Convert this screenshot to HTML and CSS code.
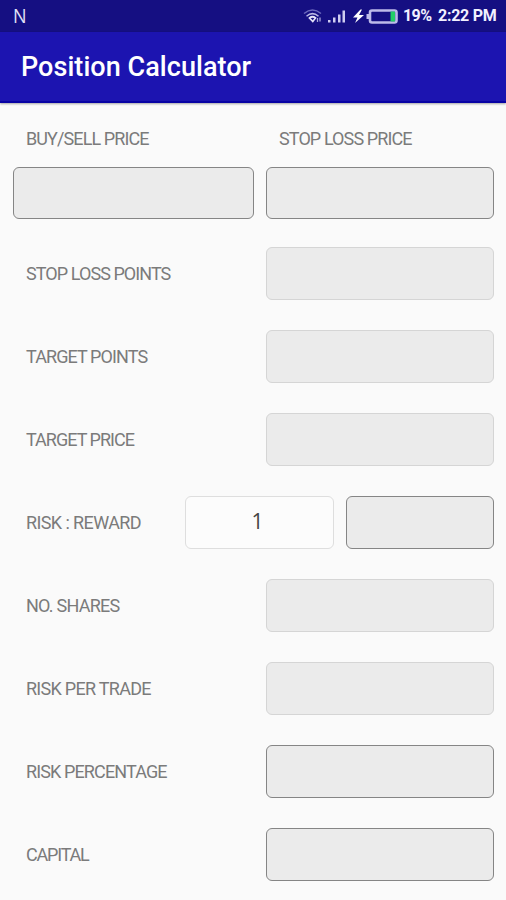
FILE: index.html
```
<!DOCTYPE html>
<html lang="en">
<head>
<meta charset="utf-8">
<title>Position Calculator</title>
<link rel="stylesheet" href="styles.css">
</head>
<body>
<div class="status">
  <span class="notif">N</span>
  <div class="tray">
    <svg class="icons" width="96" height="20" viewBox="0 0 96 20">
      <g fill="none" stroke="#6c69bd" stroke-width="1.5">
        <path d="M1 7.5Q9.500 .5 18 7.500"/>
        <path stroke="#b9b7e4" d="M3.500 10.200Q9.500 5 15.500 10.200"/>
      </g>
      <path fill="none" stroke="#e4e3f8" stroke-width="1.700" d="M6.500 12Q9.500 9.500 12.500 12L9.800 15.500Z"/>
      <path d="M14.500 12v4M17 11.500v4" stroke="#a9a7dc" stroke-width="1.300"/>
      <g fill="#cfcdf0"><path d="M25 14h2.500v2.500H25zM30 11.500h2.500v5H30zM35 8.500h2.500v8H35zM39.500 4.500H42v12h-2.500z"/></g>
      <path fill="#fff" d="M57.500 3.500L50 11.500h4.500L52 17l9-8h-5L59 3.500z"/>
      <rect x="67" y="4.500" width="26.500" height="12" rx="2" fill="none" stroke="#bdbbe9" stroke-width="2.600"/>
      <path fill="#bdbbe9" d="M63.500 8H67v5h-3.500z"/>
      <path fill="#23cf67" d="M87.500 5.500H92v10h-4.500z"/>
    </svg>
    <span class="percent">19%</span>
    <span class="clock">2:22 PM</span>
  </div>
</div>
<header class="bar"><h1>Position Calculator</h1></header>
<main class="form">
  <div class="heads"><label class="l-buy">BUY/SELL PRICE</label><label class="l-slprice">STOP LOSS PRICE</label></div>
  <div class="prices"><div class="field active buy"></div><div class="field active"></div></div>
  <div class="row"><label class="l-slpoints">STOP LOSS POINTS</label><div class="field"></div></div>
  <div class="row"><label class="l-tpoints">TARGET POINTS</label><div class="field"></div></div>
  <div class="row"><label class="l-tprice">TARGET PRICE</label><div class="field"></div></div>
  <div class="row"><label class="l-reward">RISK : REWARD</label><div class="ratio"><div class="field plain">1</div><div class="field active"></div></div></div>
  <div class="row"><label class="l-shares">NO. SHARES</label><div class="field"></div></div>
  <div class="row"><label class="l-trade">RISK PER TRADE</label><div class="field"></div></div>
  <div class="row"><label class="l-percent">RISK PERCENTAGE</label><div class="field active"></div></div>
  <div class="row"><label class="l-capital">CAPITAL</label><div class="field active"></div></div>
</main>
</body>
</html>
```
FILE: styles.css
```
* { box-sizing: border-box; }
body { margin: 0; height: 900px; overflow: hidden; background: #fafafa; font-family: Roboto, "Liberation Sans", sans-serif; }
.status { height: 32px; background: #150f82; color: #f1f0ff; display: flex; align-items: center; justify-content: space-between; padding: 0 9px 0 13px; }
.notif { font: 20px/32px "Open Sans", sans-serif; transform: scaleX(.9); transform-origin: left; color: #e2e1f7; }
.tray { display: flex; align-items: center; font-size: 16px; font-weight: 700; line-height: 34px; }
.icons { margin: 0 4px 0 0; }
.percent { width: 35px; letter-spacing: -.6px; white-space: nowrap; }
.clock { width: 59px; letter-spacing: -.25px; white-space: nowrap; }
.bar { height: 71px; background: #1c14b0; border-bottom: 2px solid #0802a4; padding: 0 21px; display: flex; align-items: center; box-shadow: 0 1px 2px rgba(0,0,0,.35); }
.bar h1 { margin: 0; color: #fff; font-size: 27px; line-height: 30px; font-weight: 500; letter-spacing: .05px; white-space: nowrap; }
.form { padding: 24px 12px 0 13px; }
label { color: #7b7b7b; font-size: 18px; line-height: 24px; font-weight: 400; white-space: nowrap; }
.heads { display: grid; grid-template-columns: 253px 1fr; padding-left: 13px; height: 40px; }
.prices { display: flex; justify-content: space-between; margin-bottom: 28px; }
.prices .field { height: 52px; }
.row { display: flex; align-items: center; justify-content: space-between; height: 53px; margin-bottom: 30px; padding-left: 13px; }
.field { width: 228px; height: 53px; background: #ebebeb; border: 1px solid #d5d5d5; border-radius: 6px; }
.active { border-color: #858585; }
.buy { width: 241px; }
.ratio { display: flex; gap: 12px; }
.ratio .field { width: 148px; }
.ratio .plain { width: 149px; background: #fcfcfc; border-color: #dedede; color: #444; font: 21px/48px "Open Sans", sans-serif; text-align: center; padding-right: 4px; }
.l-buy { letter-spacing: -.9px; }
.l-slprice { letter-spacing: -.9px; }
.l-slpoints { letter-spacing: -.93px; }
.l-tpoints { letter-spacing: -.9px; }
.l-tprice { letter-spacing: -.98px; }
.l-reward { letter-spacing: -.6px; }
.l-shares { letter-spacing: -.75px; }
.l-trade { letter-spacing: -.72px; }
.l-percent { letter-spacing: -.88px; }
.l-capital { letter-spacing: -1.2px; }
```
